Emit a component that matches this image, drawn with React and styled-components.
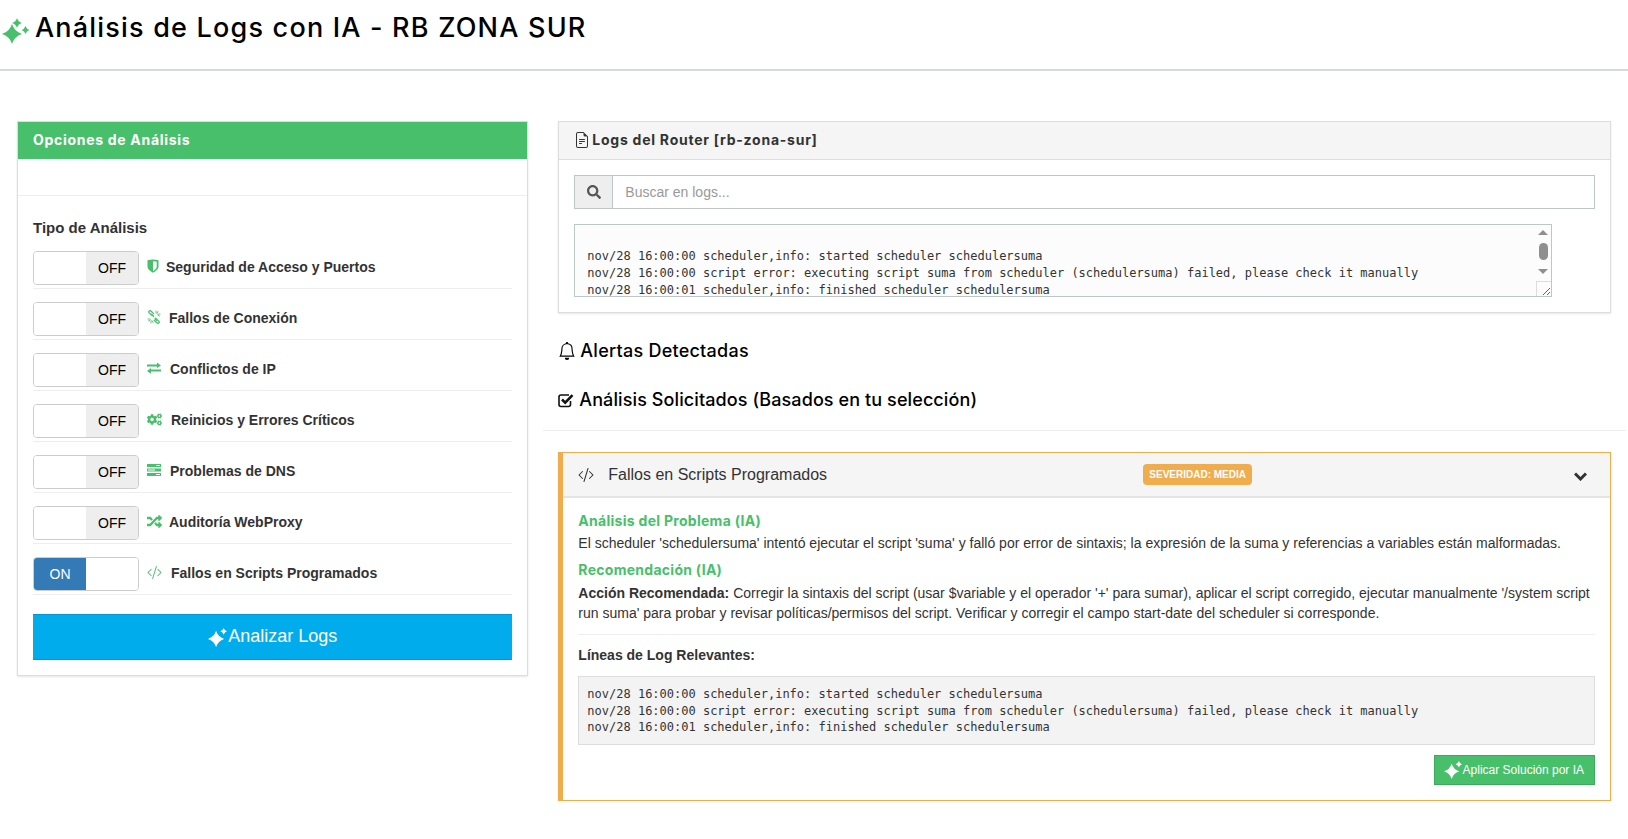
import React from "react";
import styled, { createGlobalStyle } from "styled-components";
import { FaSearch, FaCogs, FaRandom } from "react-icons/fa";
import { BsBell, BsFileEarmarkText, BsCodeSlash } from "react-icons/bs";

const GREEN = "#48bf6b";
const ORANGE = "#f0ad4e";

const GlobalStyle = createGlobalStyle`
  html, body {
    margin: 0;
    padding: 0;
    background: #fff;
  }
  body {
    font-family: "Liberation Sans", Arial, sans-serif;
    font-size: 14px;
    line-height: 20px;
    color: #333;
  }
  * {
    box-sizing: border-box;
  }
`;

const TopBar = styled.header`
  height: 71px;
  border-bottom: 2px solid #d5dadb;
  padding: 10px 0 0 2px;
`;

const PageTitle = styled.h1`
  margin: 0;
  display: flex;
  align-items: center;
  gap: 5px;
  font-family: Inter, sans-serif;
  font-size: 27px;
  line-height: 36px;
  font-weight: 500;
  letter-spacing: 1.2px;
  color: #000;

  svg {
    margin-top: 6px;
  }
`;

const Columns = styled.div`
  display: grid;
  grid-template-columns: 541.33px 1fr;
  padding: 50px 2px 0;
`;

const Col = styled.div`
  padding: 0 15px;
  min-width: 0;
`;

const Panel = styled.section`
  border: 1px solid #ddd;
  box-shadow: 0 1px 2px rgba(0, 0, 0, 0.1);
  background: #fff;
`;

const OptionsHead = styled.div`
  height: 37px;
  background: ${GREEN};
  color: #fff;
  font-family: Inter, sans-serif;
  font-weight: 700;
  font-size: 14px;
  letter-spacing: 0.7px;
  line-height: 35px;
  padding: 0 15px;
`;

const EmptyStrip = styled.div`
  height: 37px;
  border-bottom: 1px solid #eee;
`;

const OptionsBody = styled.div`
  padding: 22px 15px 15px;
`;

const GroupTitle = styled.div`
  font-weight: 700;
  font-size: 15px;
  line-height: 20px;
  margin-bottom: 13px;
`;

const OptionRow = styled.div`
  display: flex;
  align-items: center;
  height: 38px;
  padding-bottom: 4px;
  margin-bottom: 13px;
  border-bottom: 1px solid #eee;
`;

const Switch = styled.div`
  flex: none;
  width: 106px;
  height: 34px;
  border: 1px solid #ccc;
  border-radius: 4px;
  overflow: hidden;
  display: flex;
  font-size: 14px;
  line-height: 32px;
  text-align: center;
`;

const SwitchOff = styled.span`
  flex: 1;
  background: #eee;
  color: #000;
`;

const SwitchOn = styled.span`
  flex: 1;
  background: #337ab7;
  color: #fff;
`;

const SwitchBlank = styled.span`
  flex: 1;
  background: #fff;
`;

const OptionIcon = styled.span`
  flex: none;
  width: ${(p) => p.$slot}px;
  margin-left: 8px;
  margin-top: -3px;
  color: ${GREEN};
  font-size: 15px;
  display: flex;
  align-items: center;
`;

const OptionLabel = styled.span`
  font-weight: 700;
  margin-top: -2px;
`;

const AnalyzeButton = styled.button`
  display: flex;
  align-items: center;
  justify-content: center;
  gap: 1px;
  width: 100%;
  height: 46px;
  margin-top: 19px;
  padding: 0 0 2px;
  background: #00acec;
  border: 0;
  border-top: 1px solid #0098d1;
  border-bottom: 1px solid #0098d1;
  color: #fff;
  font-family: "Liberation Sans", Arial, sans-serif;
  font-size: 18px;
  line-height: 24px;

  svg {
    margin-top: 3px;
  }
`;

const LogsHead = styled.div`
  height: 38px;
  background: #f5f5f5;
  border-bottom: 1px solid #ddd;
  display: flex;
  align-items: center;
  gap: 2px;
  padding: 0 15px 2px;
  font-family: Inter, sans-serif;
  font-weight: 700;
  font-size: 14px;
  letter-spacing: 0.75px;
  color: #333;

  svg {
    font-size: 16px;
  }
`;

const LogsBody = styled.div`
  padding: 15px;
`;

const SearchGroup = styled.div`
  display: flex;
  height: 34px;
  border: 1px solid #bdc7c7;
`;

const SearchAddon = styled.span`
  width: 38px;
  background: #eee;
  border-right: 1px solid #bdc7c7;
  display: flex;
  align-items: center;
  justify-content: center;
  color: #555;
  font-size: 14px;
`;

const SearchInput = styled.input`
  flex: 1;
  border: 0;
  outline: 0;
  padding: 0 12px;
  font-family: "Liberation Sans", Arial, sans-serif;
  font-size: 14px;
  color: #555;
  &::placeholder {
    color: #999;
  }
`;

const LogFrame = styled.div`
  position: relative;
  width: 978px;
  height: 73px;
  margin-top: 15px;
`;

const LogArea = styled.textarea`
  display: block;
  width: 100%;
  height: 100%;
  padding: 6px 12px;
  border: 1px solid #bdc7c7;
  border-radius: 0;
  background: #fcfcfc;
  color: #333;
  font-family: "DejaVu Sans Mono", monospace;
  font-size: 12px;
  line-height: 17px;
  outline: 0;
  overflow: hidden;
  white-space: pre;
`;

/* the browser draws no scrollbar in the capture, so it sits over the textarea */
const ScrollArrow = styled.span`
  position: absolute;
  right: 4px;
  top: ${(p) => p.$top}px;
  width: 0;
  height: 0;
  border-left: 5px solid transparent;
  border-right: 5px solid transparent;
  ${(p) => (p.$down ? "border-top: 5px solid #8f8f8f;" : "border-bottom: 5px solid #8f8f8f;")}
`;

const ScrollThumb = styled.span`
  position: absolute;
  right: 4px;
  top: 19px;
  width: 9px;
  height: 17px;
  border-radius: 5px;
  background: #8f8f8f;
`;

const ResizeCorner = styled.span`
  position: absolute;
  right: 1px;
  bottom: 1px;
  width: 15px;
  height: 15px;
  border-left: 1px solid #ddd;
  border-top: 1px solid #ddd;
  pointer-events: none;
`;

const SectionTitle = styled.h4`
  margin: ${(p) => p.$top}px 0 0;
  display: flex;
  align-items: center;
  gap: ${(p) => p.$gap}px;
  font-family: Inter, sans-serif;
  font-size: 18px;
  line-height: 20px;
  font-weight: 500;
  letter-spacing: ${(p) => p.$track}px;
  color: #000;
`;

const Rule = styled.hr`
  margin: 20px -15px 21px;
  border: 0;
  border-top: 1px solid #eee;
`;

const AlertCard = styled.article`
  border: 1px solid ${ORANGE};
  border-left-width: 5px;
  box-shadow: 0 1px 2px rgba(0, 0, 0, 0.1);
`;

const AlertHead = styled.div`
  height: 45px;
  background: #f5f5f5;
  border-bottom: 2px solid #e4e4e4;
  display: grid;
  grid-template-columns: 30px 535px auto 1fr;
  align-items: center;
  padding: 0 23px 0 15px;
  font-size: 16px;
  color: #333;
`;

const Severity = styled.span`
  background: ${ORANGE};
  color: #fff;
  font-size: 10px;
  font-weight: 700;
  line-height: 21px;
  height: 21px;
  padding: 0 6px;
  border-radius: 4px;
`;

const Chevron = styled.span`
  justify-self: end;
  display: flex;
  margin-top: 3px;
`;

const AlertBody = styled.div`
  padding: 13px 15px 15px;
`;

const GreenTitle = styled.div`
  color: ${GREEN};
  font-family: Inter, sans-serif;
  font-weight: 700;
  font-size: 14px;
  letter-spacing: 0.28px;
  line-height: 20px;
  margin-top: ${(p) => p.$top}px;
`;

const Text = styled.p`
  margin: ${(p) => p.$top}px 0 0;
`;

const Divider = styled.hr`
  margin: 11px 0 10px;
  border: 0;
  border-top: 1px solid #eee;
`;

const LogBox = styled.pre`
  margin: 11px 0 0;
  padding: 9px 8px 0;
  height: 69px;
  background: #f3f3f3;
  border: 1px solid #ddd;
  font-family: "DejaVu Sans Mono", monospace;
  font-size: 12px;
  line-height: 16.6px;
  color: #333;
`;

const ActionRow = styled.div`
  display: flex;
  justify-content: flex-end;
  margin-top: 10px;
`;

const ApplyButton = styled.button`
  display: flex;
  align-items: center;
  gap: 1px;
  height: 30px;
  padding: 0 10px 0 9px;
  background: ${GREEN};
  border: 1px solid #3ca95c;
  color: #fff;
  font-family: "Liberation Sans", Arial, sans-serif;
  font-size: 12px;
`;

const star = (cx, cy, r) => {
  const k = r * 0.24;
  return `M${cx} ${cy - r}Q${cx + k} ${cy - k} ${cx + r} ${cy}Q${cx + k} ${cy + k} ${cx} ${cy + r}Q${cx - k} ${cy + k} ${cx - r} ${cy}Q${cx - k} ${cy - k} ${cx} ${cy - r}Z`;
};

const TitleStars = () => (
  <svg width="28" height="26" viewBox="0 0 28 26" fill={GREEN}>
    <path d={star(10, 16, 10)} />
    <path d={star(15, 5, 5)} />
    <path d={star(23.5, 12, 4)} />
  </svg>
);

const ButtonStars = ({ size }) => (
  <svg width={size} height={size} viewBox="0 0 20 20" fill="#fff">
    <path d={star(8.5, 11.5, 8.5)} />
    <path d={star(16.5, 3.5, 3.5)} />
  </svg>
);

const ShieldIcon = () => (
  <svg width="12" height="14" viewBox="0 0 12 14">
    <path d="M0.5 1.2Q6 -0.3 11.5 1.2V7.5Q11.5 11 6 13.8Q0.5 11 0.5 7.5Z" fill={GREEN} />
    <path d="M6 2.2Q8 2.2 9.7 2.7V7.5Q9.7 10 6 12Z" fill="#fff" />
  </svg>
);

const BrokenLinkIcon = () => (
  <svg width="14" height="14" viewBox="0 0 14 14" fill="none" stroke={GREEN} strokeWidth="1.3" strokeLinecap="round">
    <path d="M5.2 5.6L2.2 2.9Q1.2 1.9 2.2 1.1Q3.2 0.3 4.2 1.2L6.6 3.6" />
    <path d="M4.6 4.2L6.6 6.2" />
    <path d="M8.6 8.1L11.8 11.1Q12.8 12.1 11.8 12.9Q10.8 13.7 9.8 12.8L7.2 10.2" />
    <path d="M8 8.8L9.6 10.4" />
    <path d="M9 1V3M11 1.5L10 3.2M13 4H11M12.5 6L10.7 5" strokeWidth="0.9" />
    <path d="M1 9H3M1.5 11L3.2 10M4 13V11M6 12.5L5 10.7" strokeWidth="0.9" />
  </svg>
);

const ExchangeIcon = () => (
  <svg width="14" height="12" viewBox="0 0 14 12" fill={GREEN}>
    <path d="M0 2.6H10V0.4L14 3.4L10 6V4.4H0Z" />
    <path d="M14 7.6H4V6L0 9L4 11.8V9.4H14Z" />
  </svg>
);

const StackIcon = () => (
  <svg width="14" height="12" viewBox="0 0 14 12" fill={GREEN}>
    <rect y="0" width="14" height="3" />
    <rect y="4.5" width="14" height="3" />
    <rect y="9" width="14" height="3" />
    <rect x="9" y="1" width="4" height="1" fill="#fff" />
    <rect x="1" y="5.5" width="7" height="1" fill="#fff" />
    <rect x="9" y="10" width="4" height="1" fill="#fff" />
  </svg>
);

const CheckSquareIcon = () => (
  <svg width="16" height="15" viewBox="0 0 16 15" fill="none" stroke="#111">
    <path d="M12.5 8V11.5Q12.5 13.5 10.5 13.5H3Q1 13.5 1 11.5V4Q1 2 3 2H11" strokeWidth="1.6" />
    <path d="M4 6.5L7.2 9.7L14.5 2.2" strokeWidth="2.6" />
  </svg>
);

const ChevronIcon = () => (
  <svg width="13" height="9" viewBox="0 0 13 9" fill="none" stroke="#333" strokeWidth="3">
    <path d="M1 1.5L6.5 7L12 1.5" />
  </svg>
);

const OPTIONS = [
  { label: "Seguridad de Acceso y Puertos", icon: <ShieldIcon />, slot: 19 },
  { label: "Fallos de Conexión", icon: <BrokenLinkIcon />, slot: 22 },
  { label: "Conflictos de IP", icon: <ExchangeIcon />, slot: 23 },
  { label: "Reinicios y Errores Críticos", icon: <FaCogs />, slot: 24 },
  { label: "Problemas de DNS", icon: <StackIcon />, slot: 23 },
  { label: "Auditoría WebProxy", icon: <FaRandom />, slot: 22 },
  { label: "Fallos en Scripts Programados", icon: <BsCodeSlash />, slot: 24, on: true },
];

const LOG_LINES = [
  "nov/28 16:00:00 scheduler,info: started scheduler schedulersuma",
  "nov/28 16:00:00 script error: executing script suma from scheduler (schedulersuma) failed, please check it manually",
  "nov/28 16:00:01 scheduler,info: finished scheduler schedulersuma",
].join("\n");

export default function App() {
  return (
    <>
      <GlobalStyle />
      <TopBar>
        <PageTitle>
          <TitleStars />
          Análisis de Logs con IA - RB ZONA SUR
        </PageTitle>
      </TopBar>
      <Columns>
        <Col>
          <Panel>
            <OptionsHead>Opciones de Análisis</OptionsHead>
            <EmptyStrip />
            <OptionsBody>
              <GroupTitle>Tipo de Análisis</GroupTitle>
              {OPTIONS.map(({ label, icon, slot, on }) => (
                <OptionRow key={label}>
                  <Switch>
                    {on ? <SwitchOn>ON</SwitchOn> : <SwitchBlank />}
                    {on ? <SwitchBlank /> : <SwitchOff>OFF</SwitchOff>}
                  </Switch>
                  <OptionIcon $slot={slot}>{icon}</OptionIcon>
                  <OptionLabel>{label}</OptionLabel>
                </OptionRow>
              ))}
              <AnalyzeButton>
                <ButtonStars size={19} />
                Analizar Logs
              </AnalyzeButton>
            </OptionsBody>
          </Panel>
        </Col>
        <Col>
          <Panel>
            <LogsHead>
              <BsFileEarmarkText />
              Logs del Router [rb-zona-sur]
            </LogsHead>
            <LogsBody>
              <SearchGroup>
                <SearchAddon>
                  <FaSearch />
                </SearchAddon>
                <SearchInput placeholder="Buscar en logs..." />
              </SearchGroup>
              <LogFrame>
                <LogArea readOnly defaultValue={"\n" + LOG_LINES} />
                <ScrollArrow $top={6} />
                <ScrollThumb />
                <ScrollArrow $top={45} $down />
                <ResizeCorner />
              </LogFrame>
            </LogsBody>
          </Panel>
          <SectionTitle $top={28} $gap={4} $track={0.25}>
            <BsBell />
            Alertas Detectadas
          </SectionTitle>
          <SectionTitle $top={29} $gap={5} $track={0.1}>
            <CheckSquareIcon />
            Análisis Solicitados (Basados en tu selección)
          </SectionTitle>
          <Rule />
          <AlertCard>
            <AlertHead>
              <BsCodeSlash />
              <span>Fallos en Scripts Programados</span>
              <Severity>SEVERIDAD: MEDIA</Severity>
              <Chevron>
                <ChevronIcon />
              </Chevron>
            </AlertHead>
            <AlertBody>
              <GreenTitle $top={0}>Análisis del Problema (IA)</GreenTitle>
              <Text $top={2}>
                El scheduler 'schedulersuma' intentó ejecutar el script 'suma' y falló por error de sintaxis; la expresión de la suma y referencias a variables están malformadas.
              </Text>
              <GreenTitle $top={7}>Recomendación (IA)</GreenTitle>
              <Text $top={3}>
                <strong>Acción Recomendada:</strong> Corregir la sintaxis del script (usar $variable y el operador '+' para sumar), aplicar el script corregido, ejecutar manualmente '/system script run suma' para probar y revisar políticas/permisos del script. Verificar y corregir el campo start-date del scheduler si corresponde.
              </Text>
              <Divider />
              <strong>Líneas de Log Relevantes:</strong>
              <LogBox>{LOG_LINES}</LogBox>
              <ActionRow>
                <ApplyButton>
                  <ButtonStars size={18} />
                  Aplicar Solución por IA
                </ApplyButton>
              </ActionRow>
            </AlertBody>
          </AlertCard>
        </Col>
      </Columns>
    </>
  );
}
